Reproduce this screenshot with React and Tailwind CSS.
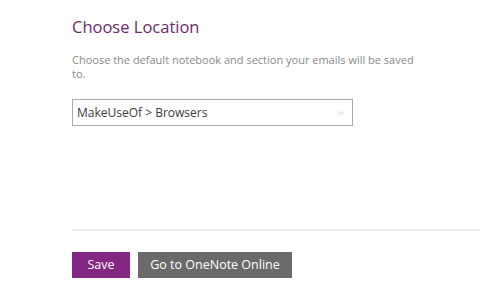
import { ChevronDown } from 'lucide-react';

export default function App() {
  return (
    <div className="w-[480px] h-[294px] bg-white overflow-hidden" style={{ fontFamily: '"Open Sans", "Noto Sans", sans-serif' }}>
      <div className="pl-[72px] pt-[15px]">
        <h1 className="text-[16.5px] leading-[24px] text-[#6b2b6b]">Choose Location</h1>
        <p className="mt-[14px] w-[352px] text-[11px] leading-[14px] text-[#8a8a8a]">
          Choose the default notebook and section your emails will be saved to.
        </p>
        <div className="mt-[18px] w-[281px] h-[27px] border border-[#a9a9a9] flex items-center justify-between pl-[4px] pr-[6px]">
          <span className="text-[12px] text-[#3a3a3a]">MakeUseOf &gt; Browsers</span>
          <ChevronDown className="w-[10px] h-[10px] text-[#b0b0b0]" strokeWidth={1.5} />
        </div>
        <div className="mt-[103px] h-[2px] bg-[#ececec]" />
        <div className="mt-[21px] flex gap-[8px]">
          <button className="w-[58px] h-[26px] bg-[#842683] text-white text-[12.5px]">Save</button>
          <button className="w-[154px] h-[26px] bg-[#6a6a6a] text-white text-[12.5px]">Go to OneNote Online</button>
        </div>
      </div>
    </div>
  );
}
